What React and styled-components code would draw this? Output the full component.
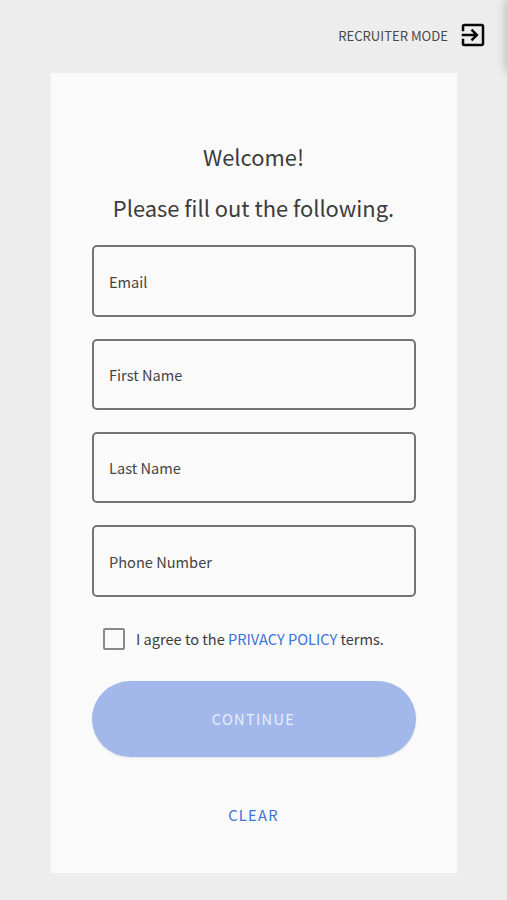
import React, { useState } from "react";
import styled, { createGlobalStyle } from 'styled-components';
import { MdExitToApp } from 'react-icons/md';

const GlobalStyle = createGlobalStyle`
    * {
        box-sizing: border-box;
    }
    body {
        margin: 0;
        background: #ededed;
        font-family: "Noto Sans CJK SC", "Noto Sans", sans-serif;
        color: #3c3c3c;
    }
    button {
        border: none;
        padding: 0;
        background: none;
        font-family: inherit;
        cursor: pointer;
    }
`;

const Page = styled.div`
    position: relative;
    width: 507px;
    height: 900px;
    overflow: hidden;
    background: #ededed;
`;

const TopBar = styled.header`
    display: flex;
    justify-content: flex-end;
    align-items: center;
    height: 73px;
    padding: 0 19px 3px 0;
`;

const ModeButton = styled.button`
    display: flex;
    align-items: center;
    gap: 10px;
    color: #4a4a4a;
    font-size: 13.1px;
    line-height: 20px;
    span {
        padding-top: 2px;
    }
    svg {
        color: #080808;
        font-size: 30px;
    }
`;

// closed drawer, only its shadow reaches into the page
const Drawer = styled.aside`
    position: absolute;
    top: 0;
    left: 507px;
    width: 200px;
    height: 71px;
    background: #fafafa;
    box-shadow: 0 0 10px rgba(0, 0, 0, 0.28);
`;

const Card = styled.form`
    display: flex;
    flex-direction: column;
    width: 406px;
    height: 800px;
    margin-left: 51px;
    padding: 58px 41.5px 0 40.5px;
    background: #fafafa;
`;

const Title = styled.h1`
    margin: 0;
    height: 51px;
    font-size: 21.9px;
    font-weight: 400;
    line-height: 51px;
    text-align: center;
    white-space: nowrap;
`;

const Fields = styled.div`
    display: grid;
    gap: 21.8px;
    margin-top: 12.4px;
`;

const Input = styled.input`
    width: 100%;
    height: 71.5px;
    padding: 0 15.5px;
    border: 2px solid #747474;
    border-radius: 5px;
    background: transparent;
    font-family: inherit;
    font-size: 14.6px;
    color: #3c3c3c;
    outline: none;
    &::placeholder {
        color: #444;
        opacity: 1;
    }
`;

const Agree = styled.label`
    display: flex;
    align-items: center;
    gap: 11px;
    height: 24px;
    margin: 30px 0 0 11.5px;
    font-size: 14.6px;
    line-height: 24px;
    white-space: nowrap;
`;

const Checkbox = styled.input`
    appearance: none;
    width: 22px;
    height: 22px;
    margin: 0;
    border: 2px solid #888;
    border-radius: 2px;
    &:checked {
        background: #3367d6;
    }
`;

const PolicyLink = styled.a`
    color: #3a70d8;
`;

const Continue = styled.button`
    height: 76px;
    margin-top: 30px;
    border-radius: 38px;
    background: #a2b8ea;
    box-shadow: 0 1px 2px rgba(0, 0, 0, 0.1);
    color: #e8eefa;
    font-size: 14.6px;
    letter-spacing: 1.3px;
`;

const Clear = styled.button`
    align-self: center;
    height: 36px;
    margin-top: 40px;
    color: #3a70d8;
    font-size: 14.6px;
    letter-spacing: 1.3px;
`;

const FIELDS = [
    { name: 'email', label: 'Email' },
    { name: 'firstName', label: 'First Name' },
    { name: 'lastName', label: 'Last Name' },
    { name: 'phone', label: 'Phone Number' },
];

const App = () => {
    const [values, setValues] = useState({});
    const [agreed, setAgreed] = useState(false);

    const handleChange = (e) => {
        const { name, value } = e.target;
        setValues(old => ({ ...old, [name]: value }));
    };

    const handleClear = () => {
        setValues({});
        setAgreed(false);
    };

    return (
        <Page>
            <GlobalStyle />
            <TopBar>
                <ModeButton type="button">
                    <span>RECRUITER MODE</span>
                    <MdExitToApp />
                </ModeButton>
            </TopBar>
            <Card onSubmit={e => e.preventDefault()}>
                <Title>Welcome!</Title>
                <Title as="h2">Please fill out the following.</Title>
                <Fields>
                    {FIELDS.map(({ name, label }) => (
                        <Input
                            key={name}
                            name={name}
                            placeholder={label}
                            value={values[name] || ''}
                            onChange={handleChange}
                        />
                    ))}
                </Fields>
                <Agree>
                    <Checkbox
                        type="checkbox"
                        checked={agreed}
                        onChange={e => setAgreed(e.target.checked)}
                    />
                    <span>I agree to the <PolicyLink>PRIVACY POLICY</PolicyLink> terms.</span>
                </Agree>
                <Continue type="submit">CONTINUE</Continue>
                <Clear type="button" onClick={handleClear}>CLEAR</Clear>
            </Card>
            <Drawer />
        </Page>
    );
}

export default App;
